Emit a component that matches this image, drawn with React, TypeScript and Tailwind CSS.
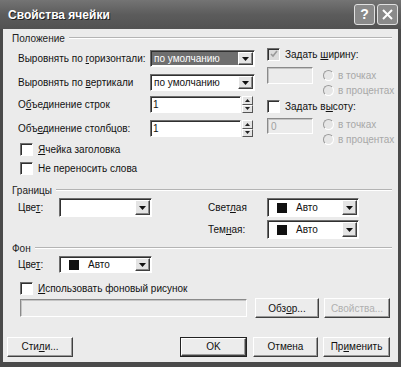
import React from "react";

const font = { fontFamily: '"Liberation Sans", Arial, sans-serif' };

function U({ children }: { children: React.ReactNode }) {
  return <span className="underline underline-offset-1">{children}</span>;
}

function Arrow() {
  return (
    <div className="flex h-full w-[15px] items-center justify-center border border-t-white border-l-white border-b-[#404040] border-r-[#404040] bg-[#e4e4e4] shadow-[inset_-1px_-1px_0_#8a8a8a]">
      <svg width="7" height="4" viewBox="0 0 7 4">
        <path d="M0 0h7L3.5 4z" fill="#111" />
      </svg>
    </div>
  );
}

function Select({
  text,
  w,
  h = "h-[17px]",
  active,
  swatch,
}: {
  text?: string;
  w: string;
  h?: string;
  active?: boolean;
  swatch?: boolean;
}) {
  return (
    <div
      className={`flex ${w} ${h} border border-t-[#6e6e6e] border-l-[#6e6e6e] border-b-white border-r-white bg-white p-[1px] shadow-[inset_1px_1px_0_#303030]`}
    >
      <div
        className={`flex flex-1 items-center gap-[9px] pl-[2px] text-[10px] ${
          active ? "bg-[#6e6e6e] text-white" : "text-[#111]"
        }`}
      >
        {swatch ? <span className="ml-[6px] h-[10px] w-[10px] bg-[#111]" /> : null}
        {text}
      </div>
      <Arrow />
    </div>
  );
}

function Spin({ value }: { value: string }) {
  return (
    <div className="flex h-[17px] w-[103px]">
      <div className="flex flex-1 items-center border border-t-[#6e6e6e] border-l-[#6e6e6e] border-b-white border-r-white bg-white pl-[2px] text-[10px] text-[#111] shadow-[inset_1px_1px_0_#303030]">
        {value}
      </div>
      <div className="ml-[1px] flex w-[11px] flex-col">
        {[0, 1].map((i) => (
          <div
            key={i}
            className="flex flex-1 items-center justify-center border border-t-white border-l-white border-b-[#555] border-r-[#555] bg-[#e4e4e4]"
          >
            <svg width="5" height="3" viewBox="0 0 5 3">
              <path d={i === 0 ? "M0 3h5L2.5 0z" : "M0 0h5L2.5 3z"} fill="#222" />
            </svg>
          </div>
        ))}
      </div>
    </div>
  );
}

function Check({
  children,
  checked,
  disabled,
}: {
  children: React.ReactNode;
  checked?: boolean;
  disabled?: boolean;
}) {
  return (
    <div className="flex h-[14px] items-center gap-[5px] text-[10px] text-[#111]">
      <div
        className={`flex h-[13px] w-[13px] items-center justify-center border border-t-[#6e6e6e] border-l-[#6e6e6e] border-b-white border-r-white shadow-[inset_1px_1px_0_#303030] ${
          disabled ? "bg-[#dcdcdc]" : "bg-white"
        }`}
      >
        {checked ? (
          <svg width="8" height="8" viewBox="0 0 8 8">
            <path d="M1 4l2 2 4-5" stroke="#9a9a9a" strokeWidth="1.6" fill="none" />
          </svg>
        ) : null}
      </div>
      <span>{children}</span>
    </div>
  );
}

function Radio({ children }: { children: React.ReactNode }) {
  return (
    <div className="flex h-[15px] items-center gap-[4px] text-[10px] text-[#a8a8a8]">
      <div className="h-[11px] w-[11px] rounded-full border border-[#9a9a9a] border-b-white border-r-white bg-[#e6e6e6]" />
      <span>{children}</span>
    </div>
  );
}

function DisabledInput({ w, h, value }: { w: string; h: string; value?: string }) {
  return (
    <div
      className={`flex ${w} ${h} items-center border border-t-[#8a8a8a] border-l-[#8a8a8a] border-b-white border-r-white bg-[#ebebeb] pl-[3px] text-[10px] text-[#a0a0a0] shadow-[inset_1px_1px_0_#c4c4c4]`}
    >
      {value}
    </div>
  );
}

function Group({ label }: { label: string }) {
  return (
    <div className="flex h-[14px] items-center pl-[9px] pr-[6px]">
      <span className="pr-[4px] text-[10px] text-[#222]">{label}</span>
      <div className="h-[2px] flex-1 border-t border-t-[#b4b4b4] border-b border-b-white" />
    </div>
  );
}

function Btn({
  children,
  w,
  def,
  disabled,
}: {
  children: React.ReactNode;
  w: string;
  def?: boolean;
  disabled?: boolean;
}) {
  return (
    <div
      className={`flex ${w} h-[20px] items-center justify-center text-[10px] ${
        def ? "border border-[#222]" : ""
      } ${disabled ? "text-[#b0b0b0]" : "text-[#111]"}`}
    >
      <div className="flex h-full w-full items-center justify-center border border-t-white border-l-white border-b-[#404040] border-r-[#404040] bg-[#ececec] shadow-[inset_-1px_-1px_0_#9a9a9a]">
        {children}
      </div>
    </div>
  );
}

export default function App() {
  return (
    <div
      className="flex h-[367px] w-[401px] flex-col border-x-[3px] border-b-[5px] border-[#4a4a4a] bg-[#ebebeb]"
      style={font}
    >
      <div className="-mx-[3px] flex h-[29px] items-center bg-gradient-to-b from-[#747474] via-[#5c5c5c] to-[#525252] pl-[8px] pr-[3px]">
        <span className="flex-1 text-[12px] font-bold text-white [text-shadow:1px_1px_0_#222]">
          Свойства ячейки
        </span>
        <div className="flex gap-[2px]">
          <div className="flex h-[21px] w-[21px] items-center justify-center rounded-[3px] border border-[#e0e0e0] bg-[#8a8a8a] text-[14px] font-bold text-white">
            ?
          </div>
          <div className="flex h-[21px] w-[21px] items-center justify-center rounded-[3px] border border-[#e0e0e0] bg-[#8a8a8a]">
            <svg width="11" height="11" viewBox="0 0 11 11">
              <path d="M1 1l9 9M10 1l-9 9" stroke="#fff" strokeWidth="2" />
            </svg>
          </div>
        </div>
      </div>

      <div className="mt-[2px]">
        <Group label="Положение" />
      </div>

      <div className="flex">
        <div className="ml-[15px] flex w-[237px] flex-col text-[10px] text-[#111]">
          <div className="mt-[5px] flex h-[17px] items-center">
            <span className="w-[132px] whitespace-nowrap">
              Выровнять по <U>г</U>оризонтали:
            </span>
            <Select text="по умолчанию" w="w-[105px]" active />
          </div>
          <div className="mt-[7px] flex h-[17px] items-center">
            <span className="w-[132px] whitespace-nowrap">
              Выровнять по <U>в</U>ертикали
            </span>
            <Select text="по умолчанию" w="w-[105px]" />
          </div>
          <div className="mt-[5px] flex h-[17px] items-center">
            <span className="w-[132px] whitespace-nowrap">
              О<U>б</U>ъединение строк
            </span>
            <Spin value="1" />
          </div>
          <div className="mt-[7px] flex h-[17px] items-center">
            <span className="w-[132px] whitespace-nowrap">
              Объ<U>е</U>динение столбцов:
            </span>
            <Spin value="1" />
          </div>
          <div className="mt-[5px] pl-[2px]">
            <Check>
              <U>Я</U>чейка заголовка
            </Check>
          </div>
          <div className="mt-[5px] pl-[2px]">
            <Check>Не переносить слова</Check>
          </div>
        </div>

        <div className="ml-[12px] flex flex-col">
          <div className="mt-[2px]">
            <Check checked disabled>
              Задать <U>ш</U>ирину:
            </Check>
          </div>
          <div className="mt-[6px] flex gap-[10px]">
            <DisabledInput w="w-[46px]" h="h-[17px]" />
            <div className="mt-[1px] flex flex-col">
              <Radio>в точках</Radio>
              <Radio>в процентах</Radio>
            </div>
          </div>
          <div className="mt-[1px]">
            <Check>
              Задать в<U>ы</U>соту:
            </Check>
          </div>
          <div className="mt-[5px] flex gap-[10px]">
            <DisabledInput w="w-[46px]" h="h-[16px]" value="0" />
            <div className="mt-[-1px] flex flex-col">
              <Radio>в точках</Radio>
              <Radio>в процентах</Radio>
            </div>
          </div>
        </div>
      </div>

      <div className="mt-[8px]">
        <Group label="Границы" />
      </div>
      <div className="mt-[1px] flex text-[10px] text-[#111]">
        <div className="ml-[15px] flex h-[19px] w-[190px] items-center">
          <span className="w-[41px]">
            Цве<U>т</U>:
          </span>
          <Select w="w-[93px]" h="h-[19px]" />
        </div>
        <div className="flex flex-col gap-[3px]">
          <div className="flex h-[19px] items-center">
            <span className="w-[59px]">
              Свет<U>л</U>ая
            </span>
            <Select text="Авто" w="w-[92px]" h="h-[19px]" swatch />
          </div>
          <div className="flex h-[19px] items-center">
            <span className="w-[59px]">
              Тем<U>н</U>ая:
            </span>
            <Select text="Авто" w="w-[92px]" h="h-[19px]" swatch />
          </div>
        </div>
      </div>

      <div className="mt-[2px]">
        <Group label="Фон" />
      </div>
      <div className="ml-[15px] mt-[1px] flex h-[17px] items-center text-[10px] text-[#111]">
        <span className="w-[41px]">
          Цве<U>т</U>:
        </span>
        <Select text="Авто" w="w-[93px]" swatch />
      </div>
      <div className="ml-[17px] mt-[8px]">
        <Check>
          <U>И</U>спользовать фоновый рисунок
        </Check>
      </div>
      <div className="ml-[17px] mt-[4px] flex h-[18px] items-center">
        <DisabledInput w="w-[227px]" h="h-[18px]" />
        <div className="ml-[8px]">
          <Btn w="w-[64px]">
            Обз<U>о</U>р...
          </Btn>
        </div>
        <div className="ml-[5px]">
          <Btn w="w-[66px]" disabled>
            Свойства...
          </Btn>
        </div>
      </div>

      <div className="mt-[19px] flex h-[21px] items-center px-[4px]">
        <Btn w="w-[66px]">
          Сти<U>л</U>и...
        </Btn>
        <div className="ml-[107px]">
          <Btn w="w-[67px]" def>
            OK
          </Btn>
        </div>
        <div className="ml-[6px]">
          <Btn w="w-[65px]">Отмена</Btn>
        </div>
        <div className="ml-[5px]">
          <Btn w="w-[67px]">
            Пр<U>и</U>менить
          </Btn>
        </div>
      </div>
    </div>
  );
}
